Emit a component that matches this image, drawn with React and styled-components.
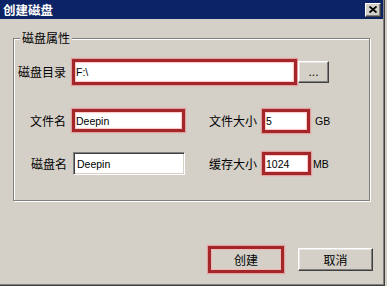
import React from "react";
import styled, { createGlobalStyle, css } from "styled-components";

const Global = createGlobalStyle`
  html, body { margin: 0; padding: 0; background: #d4d0c8; }
  body { width: 387px; height: 286px; overflow: hidden; }
  * { box-sizing: border-box; }
`;

const CJK = `"Noto Sans CJK SC", "Noto Sans", sans-serif`;
const LATIN = `"Liberation Sans", Arial, sans-serif`;

const Frame = styled.div`
  width: 385px;
  height: 286px;
  background: #d4d0c8;
  border-right: 1px solid #404040;
  border-bottom: 1px solid #404040;
  box-shadow: inset -1px -1px 0 #808080;
  display: flex;
  flex-direction: column;
  font-family: ${CJK};
  color: #000;
`;

const TitleBar = styled.div`
  height: 19px;
  margin-right: 1px;
  background: #0c2466;
  display: flex;
  align-items: center;
  justify-content: space-between;
  padding: 0 2px 0 3px;
`;

const Title = styled.span`
  color: #fff;
  font-family: ${CJK};
  font-weight: 700;
  font-size: 12.5px;
  line-height: 19px;
`;

const CloseBtn = styled.div`
  width: 16px;
  height: 14px;
  background: #d4d0c8;
  border: 1px solid;
  border-color: #fff #404040 #404040 #fff;
  box-shadow: inset -1px -1px 0 #808080;
  display: flex;
  align-items: center;
  justify-content: center;
`;

const GroupBox = styled.div`
  position: relative;
  margin: 19px 0 0 13px;
  width: 357px;
  height: 163px;
  border: 1px solid #808080;
  box-shadow: 1px 1px 0 #fff, inset 1px 1px 0 #fff;
  padding-top: 20px;
  display: flex;
  flex-direction: column;
`;

const Legend = styled.span`
  position: absolute;
  top: -9px;
  left: 6px;
  padding: 0 2px;
  background: #d4d0c8;
  font-size: 12px;
  line-height: 16px;
`;

const Row = styled.div`
  display: flex;
  align-items: center;
  height: ${(p) => p.$h}px;
  margin-top: ${(p) => p.$mt || 0}px;
`;

const Label = styled.span`
  width: ${(p) => p.$w}px;
  margin-left: ${(p) => p.$ml || 0}px;
  margin-right: ${(p) => p.$mr ?? 6}px;
  text-align: right;
  font-size: 12px;
  line-height: 14px;
  white-space: nowrap;
`;

const highlight = css`
  border: 3px solid #a3262a;
  box-shadow: 0 0 1px 1px rgba(238, 120, 120, 0.55),
    inset 0 0 1px 1px rgba(255, 170, 170, 0.7);
`;

const sunken = css`
  border: 1px solid;
  border-color: #808080 #fff #fff #808080;
  box-shadow: inset 1px 1px 0 #404040, inset -1px -1px 0 #d4d0c8;
`;

const Field = styled.div`
  width: ${(p) => p.$w}px;
  height: ${(p) => p.$h}px;
  background: #fff;
  display: flex;
  align-items: center;
  padding-left: ${(p) => (p.$red ? 1 : 3)}px;
  font-family: ${LATIN};
  font-size: 10.5px;
  ${(p) => (p.$red ? highlight : sunken)}
`;

const Unit = styled.span`
  margin-left: ${(p) => p.$ml}px;
  font-family: ${LATIN};
  font-size: 10.5px;
`;

const Button = styled.div`
  width: ${(p) => p.$w}px;
  height: ${(p) => p.$h}px;
  margin-left: ${(p) => p.$ml || 0}px;
  background: #d4d0c8;
  display: flex;
  align-items: center;
  justify-content: center;
  font-size: 12px;
  font-family: ${(p) => (p.$latin ? LATIN : CJK)};
  ${(p) =>
    p.$red
      ? highlight
      : css`
          border: 1px solid;
          border-color: #fff #404040 #404040 #fff;
          box-shadow: inset -1px -1px 0 #808080, inset 1px 1px 0 #e8e6e2;
        `}
`;

const ButtonRow = styled.div`
  display: flex;
  align-items: center;
  justify-content: flex-end;
  height: 27px;
  margin-top: 45px;
  padding-right: 11px;
`;

export default function App() {
  return (
    <>
      <Global />
      <Frame>
        <TitleBar>
          <Title>创建磁盘</Title>
          <CloseBtn>
            <svg width="8" height="7" viewBox="0 0 8 7">
              <path d="M0.5 0.5 L7.5 6.5 M7.5 0.5 L0.5 6.5" stroke="#000" strokeWidth="1.8" />
            </svg>
          </CloseBtn>
        </TitleBar>

        <GroupBox>
          <Legend>磁盘属性</Legend>
          <Row $h={26}>
            <Label $w={52}>磁盘目录</Label>
            <Field $red $w={225} $h={26}>F:\</Field>
            <Button $latin $w={31} $h={22} $ml={1}>...</Button>
          </Row>
          <Row $h={25} $mt={23}>
            <Label $w={52}>文件名</Label>
            <Field $red $w={113} $h={23}>Deepin</Field>
            <Label $w={48} $ml={24} $mr={5}>文件大小</Label>
            <Field $red $w={48} $h={24}>5</Field>
            <Unit $ml={5}>GB</Unit>
          </Row>
          <Row $h={25} $mt={18}>
            <Label $w={53}>磁盘名</Label>
            <Field $w={112} $h={23}>Deepin</Field>
            <Label $w={48} $ml={24} $mr={5}>缓存大小</Label>
            <Field $red $w={49} $h={23}>1024</Field>
            <Unit $ml={2}>MB</Unit>
          </Row>
        </GroupBox>

        <ButtonRow>
          <Button $red $w={76} $h={27}>创建</Button>
          <Button $w={75} $h={23} $ml={14}>取消</Button>
        </ButtonRow>
      </Frame>
    </>
  );
}
